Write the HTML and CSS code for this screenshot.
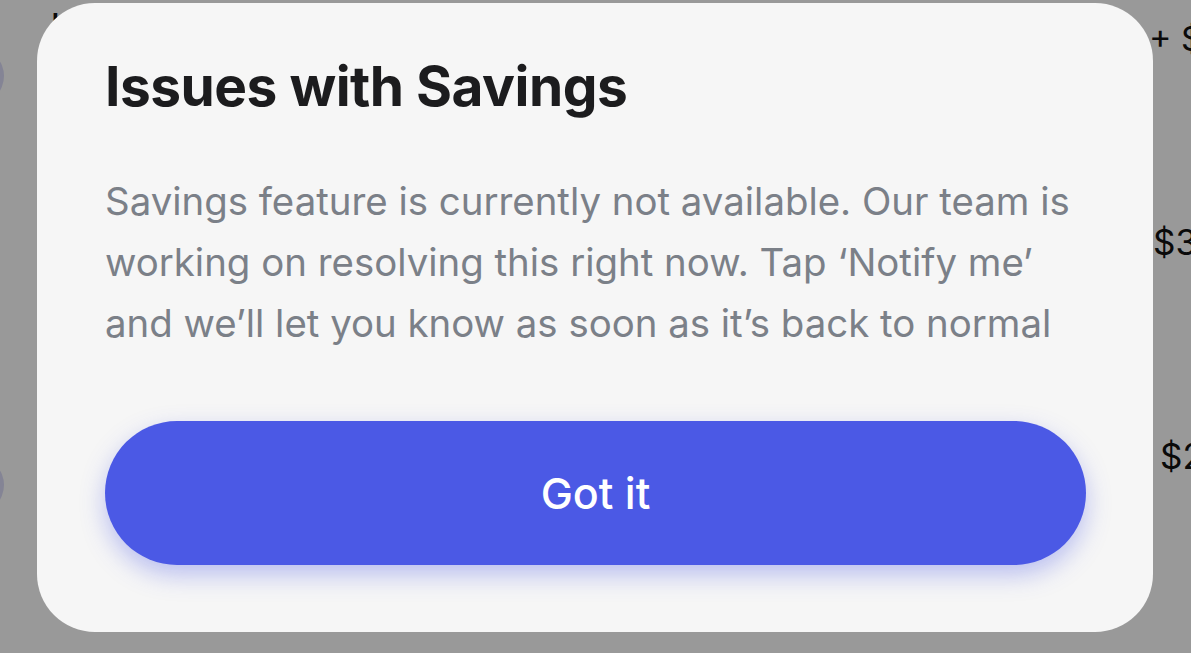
FILE: index.html
```html
<!DOCTYPE html>
<html lang="en">
<head>
    <meta charset="UTF-8">
    <meta name="viewport" content="width=device-width, initial-scale=1.0">
    <title>Savings</title>
    <link rel="stylesheet" href="styles.css">
</head>
<body>
    <!-- page underneath the dialog -->
    <div class="page">
        <div class="row row-first">
            <span class="mark">I</span>
            <span class="amount plus">+ $</span>
        </div>
        <div class="row row-avatar">
            <span class="avatar"></span>
        </div>
        <div class="row">
            <span class="avatar hidden"></span>
            <span class="amount">$3</span>
        </div>
        <div class="row row-last">
            <span class="avatar low"></span>
            <span class="amount second">$2</span>
        </div>
    </div>

    <div class="backdrop"></div>

    <div class="dialog">
        <h1 class="dialog-title">Issues with Savings</h1>
        <p class="dialog-text">Savings feature is currently not available. Our team is working on resolving this right now. Tap ‘Notify me’ and we’ll let you know as soon as it’s back to normal</p>
        <button class="dialog-button">Got it</button>
    </div>
</body>
</html>
```

FILE: styles.css
```css
body {
    margin: 0;
    height: 653px;
    overflow: hidden;
    background: #ffffff;
    font-family: Inter, "Noto Sans", sans-serif;
}

.page {
    display: flex;
    flex-direction: column;
    color: #111111;
    overflow: hidden;
}

.row {
    display: flex;
    justify-content: space-between;
    align-items: center;
    margin-left: -52px;
    margin-right: -10px;
}

.row-first {
    height: 40px;
    padding-top: 8px;
    align-items: flex-start;
}

.mark {
    margin-left: 104px;
    font-size: 24px;
    font-weight: 700;
}

.amount {
    font-size: 35px;
    width: 48px;
    white-space: nowrap;
}

.plus {
    font-size: 34px;
    margin-top: 10px;
    width: 52px;
}

.row-avatar {
    height: 56px;
}

.avatar {
    width: 56px;
    height: 56px;
    border-radius: 50%;
    background: #dcdcf8;
}

.hidden {
    visibility: hidden;
}

.row:nth-child(3) {
    margin-top: 110px;
}

.row-last {
    margin-top: 165px;
    align-items: flex-start;
}

.low {
    margin-top: 22px;
}

.second {
    margin-right: -7px;
}

.backdrop {
    position: fixed;
    inset: 0;
    background: rgba(0, 0, 0, 0.4);
}

.dialog {
    position: fixed;
    left: 37px;
    top: 3px;
    width: 1116px;
    height: 629px;
    box-sizing: border-box;
    padding: 50px 60px 67px 68px;
    background: #f6f6f6;
    border-radius: 58px;
    display: flex;
    flex-direction: column;
}

.dialog-title {
    margin: 0;
    font-size: 55px;
    font-weight: 700;
    line-height: 66px;
    letter-spacing: -0.5px;
    color: #1c1c1e;
}

.dialog-text {
    margin: 52px 0 0;
    font-size: 38.4px;
    line-height: 61px;
    color: #7b8088;
}

.dialog-button {
    margin-top: auto;
    margin-right: 7px;
    height: 144px;
    border: none;
    border-radius: 72px;
    background: #4b59e5;
    color: #ffffff;
    font-family: Inter, "Noto Sans", sans-serif;
    font-size: 43px;
    font-weight: 500;
    box-shadow: 0 10px 24px rgba(75, 89, 229, 0.35);
}
```
